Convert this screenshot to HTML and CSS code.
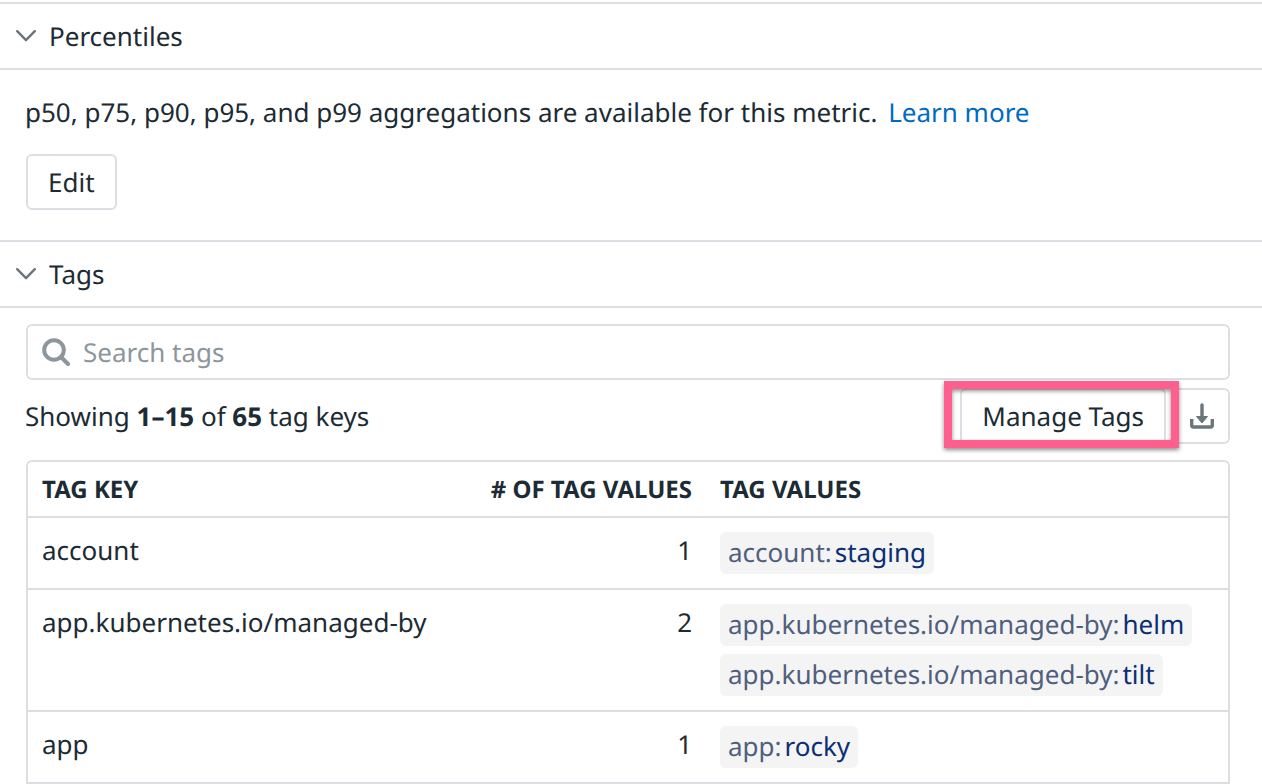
FILE: index.html
```html
<!DOCTYPE html>
<html lang="en">
<head>
<meta charset="utf-8">
<title>Metric details</title>
<link rel="stylesheet" href="styles.css">
</head>
<body>
<main class="panel">
  <section class="section">
    <h2 class="section-title">
      <button class="section-toggle" type="button" aria-expanded="true">
        <svg class="chevron" viewBox="0 0 20 12" aria-hidden="true"><path d="M1.2 1.2 10 10.2 18.8 1.2"/></svg>
        Percentiles
      </button>
    </h2>
    <div class="section-body percentiles">
      <p class="description">p50, p75, p90, p95, and p99 aggregations are available for this metric. <a class="link" href="#learn-more">Learn more</a></p>
      <button class="button" type="button">Edit</button>
    </div>
  </section>

  <section class="section">
    <h2 class="section-title">
      <button class="section-toggle" type="button" aria-expanded="true">
        <svg class="chevron" viewBox="0 0 20 12" aria-hidden="true"><path d="M1.2 1.2 10 10.2 18.8 1.2"/></svg>
        Tags
      </button>
    </h2>
    <div class="section-body tags">
      <label class="search">
        <svg class="search-icon" viewBox="0 0 28 28" aria-hidden="true"><circle cx="12" cy="12" r="9.8"/><path d="M19 19 26 26"/></svg>
        <input class="search-input" type="text" placeholder="Search tags" aria-label="Search tags">
      </label>
      <div class="toolbar">
        <p class="summary">Showing <strong>1–15</strong> of <strong>65</strong> tag keys</p>
        <div class="actions">
          <div class="highlighted">
            <button class="button" type="button">Manage Tags</button>
            <span class="highlight-frame"></span>
          </div>
          <button class="button icon-button" type="button" aria-label="Download">
            <svg class="download-icon" viewBox="0 0 26 26" aria-hidden="true"><path class="stem" d="M13 2V14"/><path class="head" d="M7.5 13.5H18.5L13 20Z"/><path class="tray" d="M2.7 16V22.3Q2.7 24 4.4 24H21.6Q23.3 24 23.3 22.3V16"/></svg>
          </button>
        </div>
      </div>
      <table class="tag-table">
        <thead>
          <tr><th class="col-key">TAG KEY</th><th class="col-count"># OF TAG VALUES</th><th class="col-values">TAG VALUES</th></tr>
        </thead>
        <tbody>
          <tr>
            <td>account</td>
            <td class="col-count">1</td>
            <td><div class="chips"><span class="chip">account:<span class="chip-value">staging</span></span></div></td>
          </tr>
          <tr>
            <td>app.kubernetes.io/managed-by</td>
            <td class="col-count">2</td>
            <td><div class="chips"><span class="chip">app.kubernetes.io/managed-by:<span class="chip-value">helm</span></span><span class="chip">app.kubernetes.io/managed-by:<span class="chip-value">tilt</span></span></div></td>
          </tr>
          <tr>
            <td>app</td>
            <td class="col-count">1</td>
            <td><div class="chips"><span class="chip">app:<span class="chip-value">rocky</span></span></div></td>
          </tr>
        </tbody>
      </table>
    </div>
  </section>
</main>
</body>
</html>
```

FILE: styles.css
```css
:root {
  --text: #1c2b34;
  --line: #dddee3;
  --icon: #6b767c;
  --muted: #8d969b;
  --link: #006bc2;
}

*,
*::before,
*::after {
  box-sizing: border-box;
}

body {
  margin: 0;
  background: #fff;
  color: var(--text);
  font: 26px/38px "Noto Sans", "Open Sans", sans-serif;
  text-rendering: geometricPrecision;
}

button,
input {
  font: inherit;
  color: inherit;
  text-rendering: inherit;
}

p {
  margin: 0;
}

.panel {
  padding-top: 2px;
}

.section-title {
  margin: 0;
  font: inherit;
  border-top: 2px solid var(--line);
  border-bottom: 2px solid var(--line);
}

.section-toggle {
  display: flex;
  align-items: center;
  gap: 13px;
  width: 100%;
  height: 64px;
  padding: 0 16px;
  border: 0;
  background: none;
  text-align: left;
}

.chevron {
  width: 20px;
  height: 12px;
  fill: none;
  stroke: var(--icon);
  stroke-width: 2.4;
  stroke-linecap: round;
  stroke-linejoin: round;
}

.section-body {
  padding: 0 32px 0 26px;
}

.percentiles {
  padding-top: 23px;
  padding-bottom: 30px;
}

.description {
  margin: 0 0 23px -1px;
}

.link {
  margin-left: 4px;
  color: var(--link);
  text-decoration: none;
}

.button {
  display: flex;
  align-items: center;
  justify-content: center;
  height: 56px;
  padding: 0 20px;
  border: 2px solid var(--line);
  border-radius: 6px;
  background: #fff;
}

.icon-button {
  width: 56px;
  padding: 0;
}

.tags {
  padding-top: 16px;
}

.search {
  display: flex;
  align-items: center;
  gap: 13px;
  height: 56px;
  padding: 0 14px;
  border: 2px solid var(--line);
  border-radius: 6px;
}

.search-icon {
  flex: none;
  width: 28px;
  height: 28px;
  fill: none;
  stroke: var(--muted);
  stroke-width: 4;
  stroke-linecap: round;
}

.search-input {
  flex: 1;
  min-width: 0;
  padding: 0;
  border: 0;
  outline: 0;
  background: none;
}

.search-input::placeholder {
  color: var(--muted);
  opacity: 1;
}

.toolbar {
  display: flex;
  align-items: center;
  justify-content: space-between;
  margin: 8px 0 16px -1px;
}

.actions {
  display: flex;
  gap: 8px;
}

.highlighted {
  position: relative;
  z-index: 1;
}

.highlight-frame {
  position: absolute;
  inset: -7px -13px -4px -16px;
  border: 8px solid #ff5f8f;
  filter: drop-shadow(0 2px 2px rgba(0, 0, 0, 0.45));
  pointer-events: none;
}

.download-icon {
  width: 26px;
  height: 26px;
  fill: none;
  stroke: var(--icon);
  stroke-width: 3.4;
}

.download-icon .head {
  fill: var(--icon);
  stroke-width: 1;
  stroke-linejoin: round;
}

.download-icon .stem {
  stroke-linecap: round;
}

.tag-table {
  width: 100%;
  table-layout: fixed;
  border: 2px solid var(--line);
  border-bottom: 0;
  border-radius: 6px 6px 0 0;
  border-spacing: 0;
}

.tag-table th,
.tag-table td {
  padding: 14px;
  border-bottom: 2px solid var(--line);
  line-height: 36px;
  text-align: left;
  vertical-align: top;
}

.tag-table th {
  padding: 10px 14px 8px;
  font-size: 24px;
  font-weight: 700;
}

.tag-table .col-key {
  width: 37%;
}

.tag-table .col-values {
  width: 43.5%;
}

.tag-table .col-count {
  text-align: right;
  white-space: nowrap;
}

.chips {
  display: flex;
  flex-direction: column;
  align-items: flex-start;
  gap: 8px;
}

.chip {
  padding: 2px 8px 4px;
  border-radius: 6px;
  background: #f4f4f4;
  color: #4f5f7d;
}

.chip-value {
  margin-left: 3px;
  color: #0b2f75;
}
```
